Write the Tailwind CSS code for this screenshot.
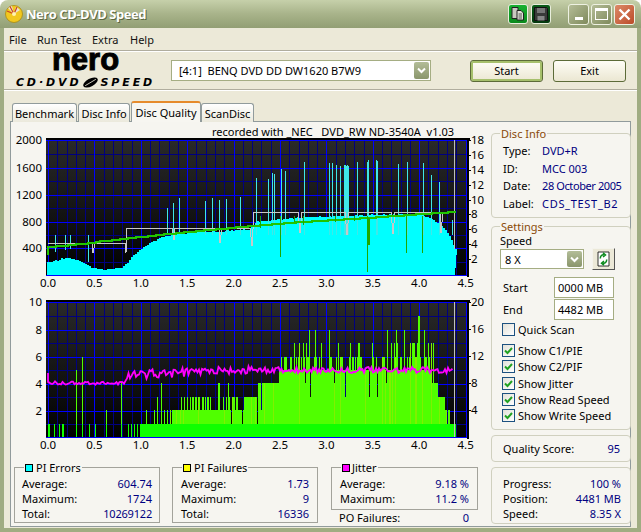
<!DOCTYPE html>
<html lang="en">
<head>
  <meta charset="UTF-8" />
  <title>Nero CD-DVD Speed</title>
  <script src="https://cdn.jsdelivr.net/npm/@tailwindcss/browser@4"></script>
</head>
<body class="bg-white">
<div class="w-[641px] h-[532px] overflow-hidden flex flex-col font-['Noto_Sans',sans-serif] text-[11px] leading-none text-black">

  <!-- Title bar -->
  <div class="h-[28px] shrink-0 rounded-t-[8px] bg-gradient-to-b from-[#c6d0aa] via-[#a8b38a] to-[#929e74] flex items-center pl-[5px] pr-[6px]">
    <svg width="18" height="18" viewBox="0 0 18 18" class="shrink-0">
      <circle cx="9" cy="9" r="8.5" fill="#f2c81e" stroke="#a88a10" stroke-width="0.8"/>
      <path d="M9 9 L3 3 L7 1 Z M9 9 L15 5 L11 1.500 Z" fill="#e8e4d0"/>
      <path d="M9 9 L5 1.500 M9 9 L12 2 M9 9 L2 6" stroke="#c8402a" stroke-width="1.200"/>
      <circle cx="9" cy="9" r="2" fill="#fff3b0"/>
    </svg>
    <span class="ml-[3px] font-['Open_Sans',sans-serif] text-[13px] tracking-[-0.45px] font-bold text-white [text-shadow:1px_1px_0_#5c6640]">Nero CD-DVD Speed</span>
    <div class="ml-auto flex items-center">
      <div class="w-[20px] h-[20px] rounded-[3px] border border-[#e8eedc] bg-gradient-to-b from-[#18b030] to-[#0a8a1c] flex items-center justify-center">
        <svg width="16" height="16" viewBox="0 0 16 16"><path d="M2 1.500h6v11H2z" fill="#c8c8c0" stroke="#222"/><path d="M7 4.500h4l2.500 2.500v7H7z" fill="#e0e0d8" stroke="#222"/><path d="M8.500 8h3.500M8.500 10h3.500M8.500 12h3.500" stroke="#555"/></svg>
      </div>
      <div class="ml-[3px] w-[20px] h-[20px] rounded-[3px] border border-[#e8eedc] bg-gradient-to-b from-[#0a5c18] to-[#04380e] flex items-center justify-center">
        <svg width="16" height="16" viewBox="0 0 16 16"><path d="M1.500 1.500h12l1 1v12h-13z" fill="#3a3a3a" stroke="#111"/><path d="M4 2h8v5H4z" fill="#777"/><path d="M4.500 10h7v4.500h-7z" fill="#888"/></svg>
      </div>
      <div class="ml-[17px] w-[21px] h-[21px] rounded-[3px] border border-[#eef1e2] bg-gradient-to-br from-[#b5bd98] to-[#7f8a5c] flex items-end justify-center pb-[4px]">
        <div class="w-[8px] h-[3px] bg-white"></div>
      </div>
      <div class="ml-[2px] w-[21px] h-[21px] rounded-[3px] border border-[#eef1e2] bg-gradient-to-br from-[#b5bd98] to-[#7f8a5c] flex items-center justify-center">
        <div class="w-[13px] h-[12px] border border-white border-t-[3px]"></div>
      </div>
      <div class="ml-[2px] w-[21px] h-[21px] rounded-[3px] border border-[#eef1e2] bg-gradient-to-br from-[#dc8a68] to-[#bb4a28] flex items-center justify-center">
        <svg width="13" height="13" viewBox="0 0 13 13"><path d="M1.500 1.500L11.500 11.500M11.500 1.500L1.500 11.500" stroke="#fff" stroke-width="2.400"/></svg>
      </div>
    </div>
  </div>

  <!-- Window body -->
  <div class="flex-1 flex flex-col border-x-[4px] border-b-[4px] border-[#a0ac82] bg-[#ece9d8] min-h-0">

    <!-- Menu -->
    <div class="h-[22px] shrink-0 flex items-center text-[#111]">
      <span class="ml-[5px] w-[28px]">File</span>
      <span class="w-[55px]">Run Test</span>
      <span class="w-[38px]">Extra</span>
      <span>Help</span>
    </div>
    <div class="h-[2px] shrink-0 border-t border-[#b0ad9e] bg-white"></div>

    <!-- Logo and drive row -->
    <div class="h-[37px] shrink-0 flex items-center">
      <div class="w-[163px] shrink-0 flex flex-col items-center pt-[1px]">
        <div class="font-['Liberation_Sans',sans-serif] font-bold text-[31px] leading-[20px] h-[20px] [-webkit-text-stroke:1px_#000] -mt-[4px]">nero</div>
        <div class="flex items-center mt-[7px] font-['DejaVu_Sans',sans-serif] font-bold italic text-[11px] leading-[10px] tracking-[2.900px]">
          <span>CD·DVD</span>
          <svg width="17" height="11" viewBox="0 0 16 10" class="mx-[1px]"><ellipse cx="8" cy="5" rx="7.500" ry="3.600" transform="rotate(-28 8 5)" fill="#000"/><path d="M3 8L13 2" stroke="#ece9d8" stroke-width="0.800"/></svg>
          <span>SPEED</span>
        </div>
      </div>
      <div class="ml-[4px] w-[260px] h-[21px] shrink-0 border border-[#a5ad83] bg-white flex items-center pl-[7px] pr-[1px]">
        <span class="whitespace-pre">[4:1]  BENQ DVD DD DW1620 B7W9</span>
        <div class="ml-auto w-[15px] h-[17px] rounded-[2px] bg-gradient-to-b from-[#b3bd98] to-[#8a966c] flex items-center justify-center">
          <svg width="9" height="7" viewBox="0 0 9 7"><path d="M1 1.500L4.500 5L8 1.500" fill="none" stroke="#fff" stroke-width="2"/></svg>
        </div>
      </div>
      <div class="ml-[39px] w-[73px] h-[22px] rounded-[3px] border border-[#5c6b38] [box-shadow:inset_0_0_0_2px_#a6c06c] bg-gradient-to-b from-[#fefdf6] to-[#ebe7d2] flex items-center justify-center">Start</div>
      <div class="ml-[10px] w-[73px] h-[22px] rounded-[3px] border border-[#5c6b38] bg-gradient-to-b from-[#fefdf6] to-[#ebe7d2] flex items-center justify-center">Exit</div>
    </div>
    <div class="h-[2px] shrink-0 border-t border-[#b0ad9e] bg-white"></div>

    <!-- Tabs -->
    <div class="h-[21px] mt-[10px] shrink-0 flex items-end pl-[8px] relative z-10 -mb-[1px]">
      <div class="w-[65px] h-[19px] rounded-t-[3px] border border-b-0 border-[#919b9c] bg-gradient-to-b from-white to-[#ebe9dc] flex items-center justify-center">Benchmark</div>
      <div class="ml-[1px] w-[52px] h-[19px] rounded-t-[3px] border border-b-0 border-[#919b9c] bg-gradient-to-b from-white to-[#ebe9dc] flex items-center justify-center">Disc Info</div>
      <div class="ml-[1px] w-[70px] h-[21px] rounded-t-[3px] border border-b-0 border-x-[#919b9c] border-t-2 border-t-[#e68b2c] bg-[#f7f6f1] flex items-center justify-center">Disc Quality</div>
      <div class="w-[53px] h-[19px] rounded-t-[3px] border border-b-0 border-[#919b9c] bg-gradient-to-b from-white to-[#ebe9dc] flex items-center justify-center">ScanDisc</div>
    </div>

    <!-- Tab panel -->
    <div class="flex-1 min-h-0 mx-[6px] mb-[1px] border border-[#919b9c] bg-[#f6f5f0] flex">

      <!-- Charts and statistics -->
      <div class="w-[480px] shrink-0 flex flex-col">
        <div class="h-[15px] shrink-0 flex items-center justify-end pr-[37px] pt-[3px] whitespace-pre">recorded with _NEC   DVD_RW ND-3540A  v1.03</div>
        <svg id="chart1" width="480" height="156" viewBox="11 137 480 156" class="block shrink-0 overflow-visible"></svg>
        <svg id="chart2" width="480" height="167" viewBox="11 293 480 167" class="block shrink-0 overflow-visible"></svg>

        <div class="mt-[7px] ml-[3px] flex">
          <div class="relative w-[146px] h-[56px] border border-[#a3a39b] px-[7px] pt-[10px] flex flex-col gap-[4px]">
            <div class="absolute -top-[6px] left-[9px] px-[1px] bg-[#f6f5f0] flex items-center gap-[2px]"><span class="w-[8px] h-[8px] border border-black bg-[#00ffff]"></span><span class="ml-[1px]">PI Errors</span></div>
            <div class="flex justify-between h-[11px]"><span>Average:</span><span class="text-[#000080]">604.74</span></div>
            <div class="flex justify-between h-[11px]"><span>Maximum:</span><span class="text-[#000080]">1724</span></div>
            <div class="flex justify-between h-[11px]"><span>Total:</span><span class="text-[#000080] tracking-[-0.2px]">10269122</span></div>
          </div>
          <div class="relative ml-[12px] w-[146px] h-[56px] border border-[#a3a39b] px-[8px] pt-[10px] flex flex-col gap-[4px]">
            <div class="absolute -top-[6px] left-[9px] px-[1px] bg-[#f6f5f0] flex items-center gap-[2px]"><span class="w-[8px] h-[8px] border border-black bg-[#ffff00]"></span><span class="ml-[1px]">PI Failures</span></div>
            <div class="flex justify-between h-[11px]"><span>Average:</span><span class="text-[#000080]">1.73</span></div>
            <div class="flex justify-between h-[11px]"><span>Maximum:</span><span class="text-[#000080]">9</span></div>
            <div class="flex justify-between h-[11px]"><span>Total:</span><span class="text-[#000080]">16336</span></div>
          </div>
          <div class="ml-[13px] w-[147px]">
            <div class="relative h-[43px] border border-[#a3a39b] px-[8px] pt-[10px] flex flex-col gap-[4px]">
              <div class="absolute -top-[6px] left-[9px] px-[1px] bg-[#f6f5f0] flex items-center gap-[2px]"><span class="w-[8px] h-[8px] border border-black bg-[#ff00ff]"></span><span>Jitter</span></div>
              <div class="flex justify-between h-[11px]"><span>Average:</span><span class="text-[#000080]">9.18 %</span></div>
              <div class="flex justify-between h-[11px]"><span>Maximum:</span><span class="text-[#000080]">11.2 %</span></div>
            </div>
            <div class="flex justify-between mt-[2px] px-[8px] h-[11px] pr-[9px]"><span>PO Failures:</span><span class="text-[#000080]">0</span></div>
          </div>
        </div>
      </div>

      <!-- Sidebar -->
      <div class="w-[140px] shrink-0 flex flex-col">
        <div class="relative mt-[11px] h-[85px] rounded-[4px] border border-[#d0d0bf] pt-[11px] pl-[11px] flex flex-col gap-[6.500px]">
          <span class="absolute -top-[6px] left-[8px] px-[1px] bg-[#f6f5f0] text-[#8a4a08]">Disc Info</span>
          <div class="flex h-[11px]"><span class="w-[39px]">Type:</span><span class="text-[#000080]">DVD+R</span></div>
          <div class="flex h-[11px]"><span class="w-[39px]">ID:</span><span class="text-[#000080]">MCC 003</span></div>
          <div class="flex h-[11px]"><span class="w-[39px]">Date:</span><span class="text-[#000080] tracking-[-0.4px]">28 October 2005</span></div>
          <div class="flex h-[11px]"><span class="w-[39px]">Label:</span><span class="text-[#000080] tracking-[0.7px]">CDS_TEST_B2</span></div>
        </div>

        <div class="relative mt-[8px] h-[204px] rounded-[4px] border border-[#d0d0bf] pl-[8px] pt-[8px]">
          <span class="absolute -top-[6px] left-[8px] px-[1px] bg-[#f6f5f0] text-[#8a4a08]">Settings</span>
          <div class="h-[11px]">Speed</div>
          <div class="flex items-center mt-[2px]">
            <div class="w-[84px] h-[20px] border border-[#a5ad83] bg-white flex items-center pl-[4px] pr-[1px]">
              <span>8 X</span>
              <div class="ml-auto w-[15px] h-[16px] rounded-[2px] bg-gradient-to-b from-[#b3bd98] to-[#8a966c] flex items-center justify-center">
                <svg width="9" height="7" viewBox="0 0 9 7"><path d="M1 1.500L4.500 5L8 1.500" fill="none" stroke="#fff" stroke-width="2"/></svg>
              </div>
            </div>
            <div class="ml-[8px] w-[23px] h-[22px] border border-[#f4f3ec] border-r-[#555] border-b-[#555] bg-[#ece9d8] flex items-center justify-center">
              <svg width="13" height="16" viewBox="0 0 13 16"><path d="M1 1h11v14H1z" fill="#fff" stroke="#000" stroke-width="0.800"/><path d="M3.500 7.500A3 3 0 0 1 7 3.800M6 1.800L8.500 4L6 6M9.500 8.500A3 3 0 0 1 6 12.200M7 10L4.500 12.200L7 14.200" fill="none" stroke="#0a8a1c" stroke-width="1.500"/></svg>
            </div>
          </div>
          <div class="flex items-center mt-[7px] pl-[3px]"><span class="w-[51px]">Start</span><div class="w-[60px] h-[21px] border border-[#a5ad83] bg-white flex items-center pl-[3px]">0000 MB</div></div>
          <div class="flex items-center mt-[1px] pl-[3px]"><span class="w-[51px]">End</span><div class="w-[60px] h-[21px] border border-[#a5ad83] bg-white flex items-center pl-[3px]">4482 MB</div></div>
          <div class="flex items-center mt-[3px] pl-[2px] h-[13px]"><span class="w-[13px] h-[13px] border border-[#1c5180] bg-gradient-to-br from-[#e2e1d8] to-white"></span><span class="ml-[3px]">Quick Scan</span></div>
          <div class="flex flex-col gap-[3.300px] mt-[8px] pl-[2px]">
            <div class="flex items-center h-[13px]"><span class="w-[13px] h-[13px] border border-[#1c5180] bg-gradient-to-br from-[#e2e1d8] to-white flex items-center justify-center"><svg width="9" height="9" viewBox="0 0 9 9"><path d="M1 4.500L3.500 7L8 2" fill="none" stroke="#21a121" stroke-width="2"/></svg></span><span class="ml-[3px]">Show C1/PIE</span></div>
            <div class="flex items-center h-[13px]"><span class="w-[13px] h-[13px] border border-[#1c5180] bg-gradient-to-br from-[#e2e1d8] to-white flex items-center justify-center"><svg width="9" height="9" viewBox="0 0 9 9"><path d="M1 4.500L3.500 7L8 2" fill="none" stroke="#21a121" stroke-width="2"/></svg></span><span class="ml-[3px]">Show C2/PIF</span></div>
            <div class="flex items-center h-[13px]"><span class="w-[13px] h-[13px] border border-[#1c5180] bg-gradient-to-br from-[#e2e1d8] to-white flex items-center justify-center"><svg width="9" height="9" viewBox="0 0 9 9"><path d="M1 4.500L3.500 7L8 2" fill="none" stroke="#21a121" stroke-width="2"/></svg></span><span class="ml-[3px]">Show Jitter</span></div>
            <div class="flex items-center h-[13px]"><span class="w-[13px] h-[13px] border border-[#1c5180] bg-gradient-to-br from-[#e2e1d8] to-white flex items-center justify-center"><svg width="9" height="9" viewBox="0 0 9 9"><path d="M1 4.500L3.500 7L8 2" fill="none" stroke="#21a121" stroke-width="2"/></svg></span><span class="ml-[3px]">Show Read Speed</span></div>
            <div class="flex items-center h-[13px]"><span class="w-[13px] h-[13px] border border-[#1c5180] bg-gradient-to-br from-[#e2e1d8] to-white flex items-center justify-center"><svg width="9" height="9" viewBox="0 0 9 9"><path d="M1 4.500L3.500 7L8 2" fill="none" stroke="#21a121" stroke-width="2"/></svg></span><span class="ml-[3px]">Show Write Speed</span></div>
          </div>
        </div>

        <div class="mt-[5px] h-[27px] rounded-[4px] border border-[#d0d0bf] flex items-center justify-between pl-[11px] pr-[10px]"><span>Quality Score:</span><span class="text-[#000080]">95</span></div>

        <div class="mt-[5px] h-[57px] rounded-[4px] border border-[#d0d0bf] pl-[11px] pr-[9px] pt-[10px] flex flex-col gap-[4px]">
          <div class="flex justify-between h-[11px]"><span>Progress:</span><span class="text-[#000080]">100 %</span></div>
          <div class="flex justify-between h-[11px]"><span>Position:</span><span class="text-[#000080]">4481 MB</span></div>
          <div class="flex justify-between h-[11px]"><span>Speed:</span><span class="text-[#000080]">8.35 X</span></div>
        </div>
      </div>
    </div>
  </div>
</div>

<script>
  // small seeded random so the noise stays the same on each load
  let seed = 7;
  function rnd() {
    seed += 1;
    const v = Math.sin(seed * 12.9898) * 43758.5453;
    return v - Math.floor(v);
  }

  function line(x1, y1, x2, y2, color, w) {
    return `<line x1="${x1}" y1="${y1}" x2="${x2}" y2="${y2}" stroke="${color}" stroke-width="${w || 1}" shape-rendering="crispEdges"/>`;
  }
  function label(x, y, text, anchor) {
    return `<text x="${x}" y="${y + 4}" font-size="11.5" fill="#000" text-anchor="${anchor}">${text}</text>`;
  }
  function interp(points, x) {
    for (let i = 1; i < points.length; i++) {
      if (x <= points[i][0]) {
        const a = points[i - 1], b = points[i];
        return a[1] + (b[1] - a[1]) * (x - a[0]) / (b[0] - a[0]);
      }
    }
    return points[points.length - 1][1];
  }

  // Plot frame shared by both charts
  function frame(id, top, bottom, majors, minors, left, right) {
    let s = `<defs><linearGradient id="${id}bg" x1="0" y1="0" x2="0" y2="1"><stop offset="0" stop-color="#2a2a2a"/><stop offset="1" stop-color="#000"/></linearGradient></defs>`;
    s += `<rect x="46" y="${top - 1}" width="421" height="${bottom - top + 2}" fill="url(#${id}bg)"/>`;
    for (let i = 0; i <= 45; i++) {
      const x = Math.round(48 + i * 9.28) + 0.5;
      if (i % 5) s += line(x, top, x, bottom, "#000080");
    }
    minors.forEach(y => { s += line(46, y + 0.5, 467, y + 0.5, "#000080"); });
    for (let i = 0; i <= 9; i++) {
      const x = Math.round(48 + i * 46.4) + 0.5;
      s += line(x, top, x, bottom, "#0000ff");
    }
    majors.forEach(y => { s += line(46, y + 0.5, 467, y + 0.5, "#0000ff"); });
    s += line(46, top - 1, 470, top - 1, "#000", 2);
    s += line(46, bottom + 0.5, 467, bottom + 0.5, "#0000ff", 1);
    s += line(468, top - 2, 468, bottom + 2, "#000", 2);
    left.forEach(l => { s += label(42, l[0], l[1], "end"); });
    right.forEach(l => { s += label(471, l[0], l[1], "start"); s += line(468, l[0] + 0.5, 471, l[0] + 0.5, "#000"); });
    ["0.0", "0.5", "1.0", "1.5", "2.0", "2.5", "3.0", "3.5", "4.0", "4.5"].forEach((t, i) => {
      s += label(48 + i * 46.4, bottom + 8, t, "middle");
    });
    return s;
  }

  // Upper chart: PI errors, read and write speed
  function drawChart1() {
    let s = frame("c1", 140, 275, [140, 168, 195, 222, 248], [154, 181, 208, 235, 262],
      [[140, "2000"], [168, "1600"], [195, "1200"], [222, "800"], [248, "400"]],
      [[140, "18"], [155, "16"], [170, "14"], [185, "12"], [200, "10"], [214, "8"], [229, "6"], [244, "4"], [259, "2"]]);

    const profile = [[47,262],[52,261],[57,260],[62,258],[70,258],[76,260],[82,263],[90,267],[96,269],[110,269],[120,268],[127,263],[132,256],[140,249],[150,243],[163,237],[173,235],[187,233],[207,232],[227,231],[250,229],[256,222],[273,220],[306,217],[340,216],[373,215],[407,214],[420,215],[430,218],[440,225],[447,232],[453,245],[455,249]];
    let d = "M47 275";
    for (let x = 47; x <= 455; x += 2) {
      const y = Math.round(interp(profile, x) + (rnd() - 0.5) * 1.2);
      d += `L${x} ${y}L${x + 2} ${y}`;
    }
    s += `<path d="${d}L455 275Z" fill="#00ffff" shape-rendering="crispEdges"/>`;

    const spikes = [[55,252],[65,250],[70,249],[88,262],[167,208],[173,203],[179,198],[205,201],[212,198],[219,200],[226,199],[240,197],[256,178],[268,179],[272,173],[274,174],[281,169],[285,171],[304,162],[329,163],[332,163],[336,165],[340,166],[344,165],[345,165],[346,166],[347,165],[348,166],[357,162],[367,162],[368,160],[376,160],[377,161],[398,164],[407,162],[423,163],[431,175],[439,182],[452,220]];
    spikes.forEach(p => { s += line(p[0] + 0.5, p[1], p[0] + 0.5, 235, "#3fe8e8"); });

    // Read speed, with the dips at each speed change
    const read = [[48,243],[92,243],[93,253],[95,243],[125,243],[126,253],[127,228],[172,228],[174,240],[175,228],[219,228],[220,243],[222,228],[250,228],[252,246],[254,212],[298,212],[300,233],[302,212],[345,212],[347,235],[349,212],[391,212],[393,234],[395,212],[440,212],[441,233],[443,212],[452,212]];
    s += `<polyline points="${read.map(p => p.join(",")).join(" ")}" fill="none" stroke="#c8c8c8" stroke-width="1" shape-rendering="crispEdges"/>`;
    s += line(454.5, 140, 454.5, 249, "#bdbdbd", 1);

    // Write speed
    const write = [[48,247],[92,243],[95,242],[140,237],[187,232],[240,227],[300,222],[368,218],[407,215],[452,212]];
    let g = "M48 255L48 247";
    for (let x = 48; x <= 452; x += 4) {
      const y = Math.round(interp(write, x));
      g += `L${x} ${y}L${x + 4} ${y}`;
    }
    s += `<path d="${g}" fill="none" stroke="#22c400" stroke-width="1.500" shape-rendering="crispEdges"/>`;
    [[280,257],[367,272],[406,253],[422,253],[260,228],[294,222],[335,222],[354,221],[303,225]].forEach(p => {
      s += line(p[0] + 0.5, 216, p[0] + 0.5, p[1], "#1fa800");
    });
    s += line(368.5, 218, 368.5, 245, "#1fa800", 2);
    document.getElementById("chart1").innerHTML = s;
  }

  // Lower chart: PI failures and jitter
  function drawChart2() {
    let s = frame("c2", 302, 437, [302, 330, 357, 384, 411], [316, 343, 370, 397, 424],
      [[302, "10"], [330, "8"], [357, "6"], [384, "4"], [411, "2"]],
      [[302, "20"], [329, "16"], [356, "12"], [383, "8"], [410, "4"]]);

    const unit = 13.4;
    const steps = [[146,1],[172,2],[244,3],[258,4],[279,5],[431,4],[438,3],[445,2],[450,1]];
    const fixed = { 48:1,49:1,54:1,59:1,62:1,63:1,76:5,82:6,89:1,95:1,106:2,121:4,128:1,131:1,134:1,137:1,140:1,141:1,142:1,143:1,144:1,145:1,
      157:3,161:4,164:2,167:2,170:2,181:3,184:3,187:3,190:3,193:3,196:3,199:3,202:3,205:3,208:3,218:4,219:4,228:4,232:3,237:3,
      285:6,286:6,291:6,294:7,299:7,303:7,306:7,309:8,315:8,321:7,329:8,338:7,350:7,358:7,359:7,372:7,387:8,391:7,394:7,396:8,397:7,404:8,410:7,412:7,413:7,414:7,417:7,418:9,419:9,424:8,428:7,431:7,433:7 };
    for (let x = 47; x <= 455; x++) {
      let level = 0;
      if (x < 146) level = fixed[x] || 0;
      else {
        steps.forEach(p => { if (x >= p[0]) level = p[1]; });
        if (fixed[x]) level = Math.max(level, fixed[x]);
        else if (x < 172 && rnd() < 0.2) level = 2;
        else if (x > 190 && x < 240 && rnd() < 0.35) level = 3;
        else if (x > 280 && x < 430 && rnd() < 0.35) level = 6;
        // a few dark gaps between the bars
        if (x > 172 && !fixed[x] && rnd() < 0.05) level = Math.max(level - 2, 1);
      }
      if (!level) continue;
      const top = Math.round(437 - level * unit);
      if (level > 1) s += `<rect x="${x}" y="${top}" width="1" height="${424 - top}" fill="${rnd() < 0.12 ? "#80f000" : "#50ff00"}" shape-rendering="crispEdges"/>`;
      s += `<rect x="${x}" y="${Math.max(top, 424)}" width="1" height="${437 - Math.max(top, 424)}" fill="#10ff00" shape-rendering="crispEdges"/>`;
    }

    // Jitter trace
    const jitter = [[48,383],[125,383],[128,375],[240,370],[454,370]];
    let pts = "48,373 48,382";
    for (let x = 49; x <= 453; x += 1.5) {
      const amp = x < 126 ? 3.5 : x < 250 ? 9 : 6;
      pts += ` ${x},${(interp(jitter, x) + (rnd() - 0.5) * amp).toFixed(1)}`;
    }
    s += `<polyline points="${pts}" fill="none" stroke="#ff00ff" stroke-width="1.800"/>`;
    s += line(454.5, 302, 454.5, 437, "#c0c0c0", 1);
    document.getElementById("chart2").innerHTML = s;
  }

  drawChart1();
  drawChart2();
</script>
</body>
</html>
